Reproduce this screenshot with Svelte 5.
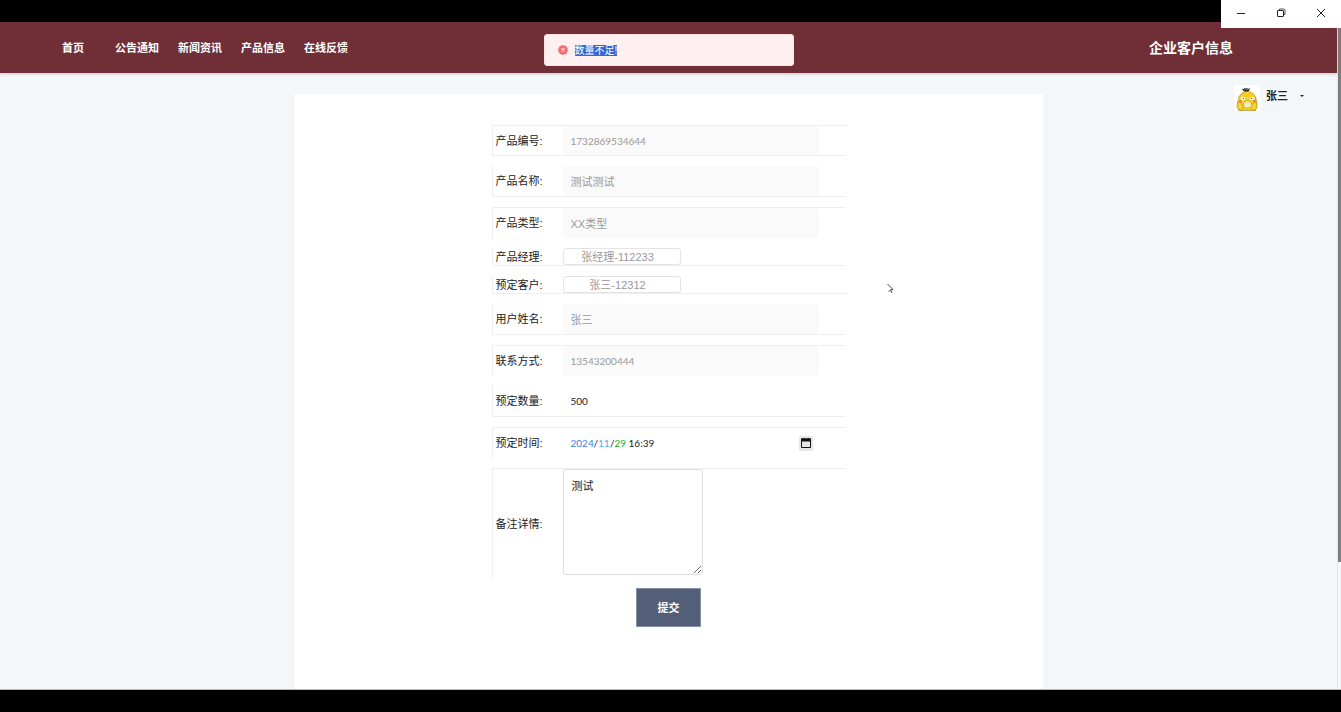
<script>
  const links = ['首页', '公告通知', '新闻资讯', '产品信息', '在线反馈'];
  let quantity = $state('500');
  let note = $state('测试');
</script>

<div class="screen">
  <div class="window-controls">
    <button aria-label="最小化">
      <svg width="10" height="10" viewBox="0 0 10 10"><path d="M1 5.5h8" /></svg>
    </button>
    <button aria-label="还原">
      <svg width="10" height="10" viewBox="0 0 10 10">
        <rect x="1.500" y="2.500" width="6" height="6" rx=".5" />
        <path d="M3.500 2.500V1h4q1.500 0 1.500 1.500v4H7.500" stroke-width=".8" />
      </svg>
    </button>
    <button aria-label="关闭">
      <svg width="10" height="10" viewBox="0 0 10 10"><path d="M1 1l8 8M9 1l-8 8" /></svg>
    </button>
  </div>

  <div class="viewport">
    <div class="page">
      <header>
        <nav>
          {#each links as link}
            <a href="#top">{link}</a>
          {/each}
        </nav>
        <h1>企业客户信息</h1>
      </header>

      <div class="toast" role="alert">
        <svg width="10" height="10" viewBox="0 0 10 10">
          <circle cx="5" cy="5" r="4.800" fill="#f56c6c" />
          <path d="M3.500 3.500l3 3M6.500 3.500l-3 3" stroke="#fef0f0" stroke-width="1.100" />
        </svg>
        <span>数量不足!</span>
      </div>

      <main>
        <form onsubmit={(e) => e.preventDefault()}>
          <div class="row top bottom">
            <label for="code">产品编号:</label>
            <input id="code" class="number" value="1732869534644" disabled />
          </div>
          <div class="row bottom">
            <label for="name">产品名称:</label>
            <input id="name" value="测试测试" disabled />
          </div>
          <div class="row top">
            <label for="type">产品类型:</label>
            <input id="type" value="XX类型" disabled />
          </div>
          <div class="row short bottom">
            <label for="manager">产品经理:</label>
            <select id="manager" disabled><option>张经理-112233</option></select>
          </div>
          <div class="row short bottom">
            <label for="customer">预定客户:</label>
            <select id="customer" disabled><option>张三-12312</option></select>
          </div>
          <div class="row bottom">
            <label for="user">用户姓名:</label>
            <input id="user" value="张三" disabled />
          </div>
          <div class="row top">
            <label for="phone">联系方式:</label>
            <input id="phone" class="number" value="13543200444" disabled />
          </div>
          <div class="row bottom">
            <label for="quantity">预定数量:</label>
            <input id="quantity" class="number" bind:value={quantity} />
          </div>
          <div class="row top">
            <label for="year">预定时间:</label>
            <div class="datetime number">
              <input id="year" class="year" value="2024" />/<input
                class="month" aria-label="月" value="11" />/<input
                class="day" aria-label="日" value="29" />
              <input class="time" aria-label="时间" value="16:39" />
              <button type="button" aria-label="选择日期">
                <svg width="10" height="10" viewBox="0 0 10 10">
                  <path d="M.5 1h9v8.500h-9z" fill="none" stroke="#111" />
                  <path d="M0 .5h10v3h-10zM2 0h1v1h-1zM7 0h1v1h-1z" fill="#111" />
                </svg>
              </button>
            </div>
          </div>
          <div class="row top tall">
            <label for="note">备注详情:</label>
            <textarea id="note" bind:value={note}></textarea>
          </div>
          <button class="submit">提交</button>
        </form>

        <button class="user">
          <svg class="avatar" width="26" height="26" viewBox="0 0 26 26">
            <rect width="26" height="26" fill="#fff" />
            <path d="M12 7L8.500 4M12.500 7L10.500 3M13 7V3M13.500 7L15.500 3.500" stroke="#28231f" stroke-width="1.300" />
            <path d="M5 25.500C3.500 22 3 17 5 12 7 8 9.500 6.500 13 6.500s6.500 1.500 8.500 5.500c2 5 1.500 10 0 13.500z" fill="#f5cf24" stroke="#8d741d" stroke-width=".5" />
            <path d="M7.500 25.500q-5-1-4.500-5 .5-4 2.500-4 3 3 4 6zM18.500 25.500q5-1 4.500-5-.5-4-2.500-4-3 3-4 6z" fill="#f7d62c" stroke="#a07f1a" stroke-width=".6" />
            <ellipse cx="9" cy="13.500" rx="2.200" ry="1.800" fill="#fff" />
            <ellipse cx="18" cy="13.500" rx="2.200" ry="1.800" fill="#fff" />
            <circle cx="9.300" cy="13.500" r=".6" fill="#222" />
            <circle cx="17.500" cy="13.500" r=".6" fill="#222" />
            <circle cx="6.500" cy="16.500" r="1.500" fill="#ee7f55" />
            <circle cx="20.500" cy="16" r="1.500" fill="#ee7f55" />
            <path d="M10.500 17.500q3-3.500 6 0 3 3-.5 5-2.500 1-5 0-3.500-2-.5-5z" fill="#f6edb4" stroke="#9d8333" stroke-width=".5" />
          </svg>
          <span>张三</span>
          <i class="caret"></i>
        </button>
      </main>
    </div>
    <div class="scrollbar"><div class="thumb"></div></div>
  </div>

  <svg class="pointer" width="8" height="12" viewBox="0 0 8 12">
    <path d="M.5 1L6 6.500 3.500 7 5 10" fill="none" stroke="#333" stroke-width=".9" />
    <path d="M3.500 7L1.500 8.500" stroke="#444" stroke-width=".9" />
  </svg>
</div>

<style>
  :global(body) {
    margin: 0;
    background: #000;
  }
  .screen {
    position: relative;
    display: flex;
    box-sizing: border-box;
    min-height: 100vh;
    padding: 22px 0;
    font: 11px/16px "Liberation Sans", "Noto Sans CJK SC", sans-serif;
    color: #222;
  }
  .screen * {
    box-sizing: border-box;
  }
  input,
  select,
  textarea,
  button {
    margin: 0;
    padding: 0;
    border: 0;
    background: none;
    font: inherit;
    color: inherit;
  }
  .window-controls {
    position: absolute;
    z-index: 3;
    top: 0;
    right: 0;
    display: flex;
    height: 28px;
    background: #fff;
  }
  .window-controls button {
    display: grid;
    place-items: center;
    width: 40px;
    padding-bottom: 2px;
  }
  .window-controls svg {
    fill: none;
    stroke: #222;
  }
  .viewport {
    display: flex;
    flex: 1;
    border-bottom: 1px solid #b9bcbd;
  }
  .page {
    position: relative;
    display: flex;
    flex: 1;
    flex-direction: column;
    background: #f3f7f9;
  }
  header {
    z-index: 1;
    display: flex;
    align-items: center;
    justify-content: space-between;
    height: 51px;
    padding: 0 104px 0 52px;
    background: #702f37;
    box-shadow: 0 1px 3px #0003;
    color: #fff;
  }
  nav {
    display: flex;
  }
  nav a {
    width: 63px;
    padding-left: 10px;
    color: inherit;
    font-weight: 700;
    text-decoration: none;
    white-space: nowrap;
  }
  nav a:first-child {
    width: 53px;
  }
  h1 {
    margin: 0;
    font-size: 14px;
    line-height: 20px;
  }
  .toast {
    position: absolute;
    z-index: 2;
    top: 12px;
    left: 50%;
    display: flex;
    align-items: center;
    gap: 7px;
    width: 250px;
    height: 32px;
    padding: 0 13px;
    border: 1px solid #fde2e2;
    border-radius: 3px;
    background: #fef0f0;
    transform: translateX(-50%);
  }
  .toast span {
    background: #3367d1;
    color: #fff;
    font-size: 10px;
    line-height: 11px;
  }
  main {
    display: grid;
    flex: 1;
    grid-template-columns: 1fr 56% 1fr;
  }
  form {
    display: flex;
    grid-column: 2;
    flex-direction: column;
    align-items: center;
    gap: 10px;
    margin-top: 21px;
    padding: 31px 16px;
    background: #fff;
  }
  .row {
    display: flex;
    align-items: center;
    width: 100%;
    max-width: 354px;
    height: 31px;
    border: 0 solid #eee;
    border-left-width: 1px;
  }
  .top {
    border-top-width: 1px;
  }
  .bottom {
    border-bottom-width: 1px;
  }
  .short {
    height: 18px;
  }
  .tall {
    height: 110px;
  }
  label {
    flex: none;
    width: 70px;
    padding-left: 3px;
  }
  .row > input,
  .datetime {
    width: 256px;
    height: 100%;
    padding: 0 8px;
    border-radius: 3px;
  }
  .row > input:disabled {
    background: #fafafa;
    color: #999;
  }
  .number {
    font-family: Lato, "Noto Sans CJK SC", sans-serif;
    font-size: 10px;
  }
  select {
    width: 118px;
    height: 100%;
    padding-right: 8px;
    border: 1px solid #e4e4e4;
    border-radius: 3px;
    appearance: none;
    text-align: center;
    text-align-last: center;
  }
  select:disabled {
    color: #999;
    opacity: 1;
  }
  .datetime {
    display: flex;
    align-items: center;
  }
  .year {
    width: 23px;
    color: #3d7fe0;
  }
  .month {
    width: 12px;
    color: #35b5ea;
  }
  .day {
    width: 12px;
    color: #22b422;
  }
  .time {
    width: 28px;
    margin-left: 2px;
  }
  .datetime button {
    display: grid;
    place-items: center;
    width: 14px;
    height: 15px;
    margin-left: auto;
    margin-right: -2px;
    border-radius: 2px;
    background: #e6e6e6;
  }
  textarea {
    align-self: flex-start;
    width: 140px;
    height: 106px;
    padding: 8px;
    border: 1px solid #ddd;
    border-radius: 3px;
  }
  .submit {
    width: 65px;
    height: 39px;
    border: 1px solid #8791a3;
    background: #535f78;
    color: #fff;
    font-weight: 700;
  }
  .user {
    display: flex;
    align-items: center;
    justify-self: end;
    align-self: start;
    gap: 6px;
    margin: 12px 33px 0 0;
    font-weight: 700;
  }
  .user span {
    margin-bottom: 4px;
  }
  .caret {
    margin: 0 0 4px 6px;
    border: 2px solid transparent;
    border-top-color: #222;
    border-bottom: 0;
  }
  .scrollbar {
    width: 4px;
    border-left: 1px solid #e3e6e7;
    background: #f5f7f8;
  }
  .thumb {
    height: 81%;
    background: #7d7d7d;
  }
  .pointer {
    position: absolute;
    z-index: 4;
    top: 283px;
    left: 887px;
    pointer-events: none;
  }
</style>
